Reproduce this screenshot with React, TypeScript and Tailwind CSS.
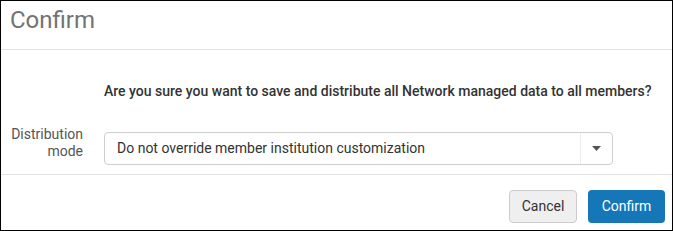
import React from 'react';

export default function App() {
  return (
    <div className="w-[673px] h-[231px] bg-white border border-black flex flex-col font-['Roboto',sans-serif] overflow-hidden">
      {/* Header */}
      <div className="h-[49px] shrink-0 border-b border-[#e3e3e3] pl-[9px] pt-[3px]">
        <h1 className="text-[24px] leading-[32px] text-[#737373] font-normal">Confirm</h1>
      </div>

      {/* Body */}
      <div className="h-[125px] shrink-0 border-b border-[#e3e3e3] flex flex-col">
        <div className="pt-[32px] pl-[103px] text-[14px] leading-[18px] text-[#333] font-medium">
          Are you sure you want to save and distribute all Network managed data to all members?
        </div>
        <div className="flex items-start mt-[26px]">
          <label className="w-[83px] shrink-0 text-right text-[14px] leading-[17px] text-[#555] pr-[1px]">
            Distribution
            <br />
            mode
          </label>
          <div className="ml-[20px] mt-[6px] w-[509px] h-[33px] border border-[#cfcfcf] rounded-[4px] flex items-center">
            <span className="flex-1 pl-[12px] text-[14px] text-[#333]">
              Do not override member institution customization
            </span>
            <div className="w-[32px] h-full border-l border-[#ececec] flex items-center justify-center">
              <svg width="9" height="5" viewBox="0 0 9 5">
                <path d="M0 0h9L4.5 5z" fill="#555" />
              </svg>
            </div>
          </div>
        </div>
      </div>

      {/* Footer */}
      <div className="flex-1 flex justify-end items-start pt-[15px] pr-[7px] gap-[11px]">
        <button className="h-[33px] w-[68px] rounded-[4px] border border-[#cccccc] bg-[#efefef] text-[14px] text-[#333]">
          Cancel
        </button>
        <button className="h-[33px] w-[77px] rounded-[4px] bg-[#1577b8] text-[14px] text-white">
          Confirm
        </button>
      </div>
    </div>
  );
}
